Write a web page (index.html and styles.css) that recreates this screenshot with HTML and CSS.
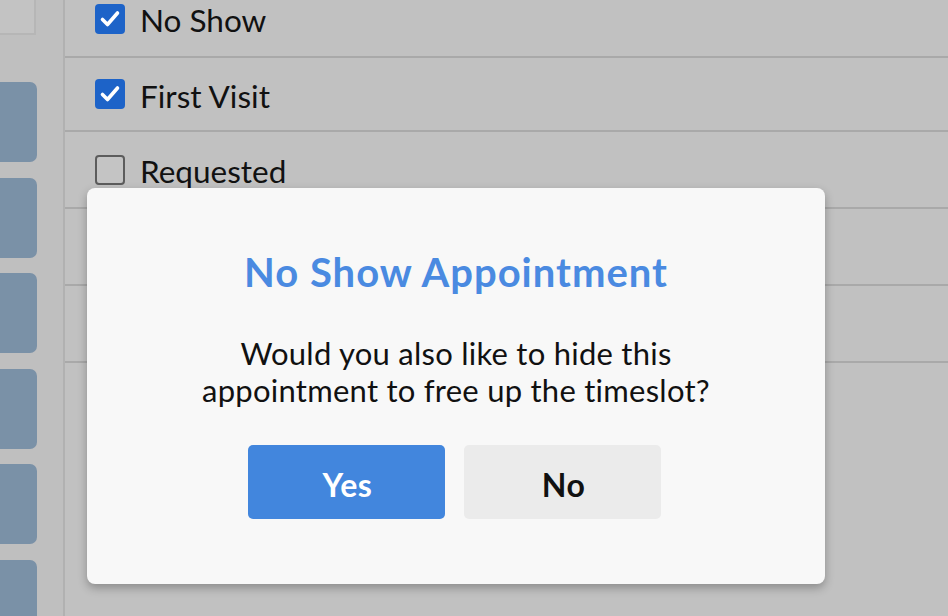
FILE: index.html
```html
<!DOCTYPE html>
<html lang="en">
<head>
<meta charset="utf-8">
<title>No Show Appointment</title>
<link rel="stylesheet" href="styles.css">
</head>
<body>
<div class="page">
  <aside class="sidebar">
    <div class="sidebar-top"></div>
    <div class="cards">
      <div class="card"></div>
      <div class="card"></div>
      <div class="card"></div>
      <div class="card"></div>
      <div class="card"></div>
      <div class="card"></div>
    </div>
  </aside>
  <main class="content">
    <div class="row">
      <span class="box box-checked"><svg viewBox="0 0 30 30" width="30" height="30"><path d="M7.5 15.5 L12.5 20.5 L22.5 9" fill="none" stroke="#fff" stroke-width="3.6" stroke-linecap="round" stroke-linejoin="round"/></svg></span>
      <span class="label">No Show</span>
    </div>
    <div class="row">
      <span class="box box-checked"><svg viewBox="0 0 30 30" width="30" height="30"><path d="M7.5 15.5 L12.5 20.5 L22.5 9" fill="none" stroke="#fff" stroke-width="3.6" stroke-linecap="round" stroke-linejoin="round"/></svg></span>
      <span class="label">First Visit</span>
    </div>
    <div class="row">
      <span class="box box-empty"></span>
      <span class="label">Requested</span>
    </div>
    <div class="row"></div>
    <div class="row"></div>
  </main>
</div>

<div class="modal">
  <h1 class="modal-title">No Show Appointment</h1>
  <p class="modal-text">Would you also like to hide this<br>appointment to free up the timeslot?</p>
  <div class="modal-actions">
    <button class="btn btn-yes">Yes</button>
    <button class="btn btn-no">No</button>
  </div>
</div>
</body>
</html>
```

FILE: styles.css
```css
html, body {
  margin: 0;
  padding: 0;
  height: 100%;
  overflow: hidden;
}
body {
  background: #c1c1c1;
  font-family: Lato, "Open Sans", "Liberation Sans", sans-serif;
  color: #111;
}
.page {
  display: flex;
  height: 616px;
}
.sidebar {
  width: 63px;
  flex: none;
  background: #bfbfbf;
  border-right: 2px solid #b1b1b1;
}
.sidebar-top {
  width: 34px;
  height: 33px;
  background: #c3c3c3;
  border-right: 2px solid #b6b6b6;
  border-bottom: 2px solid #b6b6b6;
}
.cards {
  display: flex;
  flex-direction: column;
  gap: 15.6px;
  margin-top: 47px;
}
.card {
  width: 37px;
  height: 80px;
  flex: none;
  background: #7a91a7;
  border-radius: 0 7px 7px 0;
}
.content {
  flex: 1;
  background: #c1c1c1;
  margin-top: -19px;
}
.row {
  display: flex;
  align-items: center;
  gap: 15px;
  height: 75px;
  padding-left: 30px;
  border-bottom: 2px solid #a9a9a9;
}
.row:nth-child(2) { height: 72px; }
.box {
  width: 30px;
  height: 30px;
  border-radius: 4px;
  box-sizing: border-box;
  flex: none;
  display: block;
}
.box svg { display: block; }
.box-checked {
  background: #1d63c8;
}
.box-empty {
  border: 2px solid #5c5c5c;
  background: #c4c4c4;
}
.label {
  font-size: 31.5px;
  line-height: 36px;
  color: #111;
  padding-top: 3px;
}

.modal {
  position: absolute;
  left: 87px;
  top: 188px;
  width: 738px;
  height: 396px;
  box-sizing: border-box;
  background: #f8f8f8;
  border-radius: 8px;
  box-shadow: 0 4px 10px rgba(0, 0, 0, 0.28);
  display: flex;
  flex-direction: column;
  align-items: center;
  padding-top: 61px;
}
.modal-title {
  margin: 0;
  font-size: 40px;
  line-height: 46px;
  letter-spacing: 1px;
  font-weight: 700;
  color: #4a8ae1;
}
.modal-text {
  margin: 40px 0 0;
  font-size: 31px;
  line-height: 37px;
  letter-spacing: 0.25px;
  text-align: center;
  color: #111;
}
.modal-actions {
  display: flex;
  gap: 19px;
  margin-top: 36px;
  margin-right: 4px;
}
.btn {
  width: 197px;
  height: 74px;
  border: none;
  border-radius: 5px;
  font-family: Lato, "Open Sans", "Liberation Sans", sans-serif;
  font-size: 32px;
  letter-spacing: 0.6px;
  font-weight: 700;
  padding: 4px 0 0 3px;
  cursor: pointer;
}
.btn-yes {
  background: #4286dd;
  color: #fff;
}
.btn-no {
  background: #ebebeb;
  color: #111;
}
```
